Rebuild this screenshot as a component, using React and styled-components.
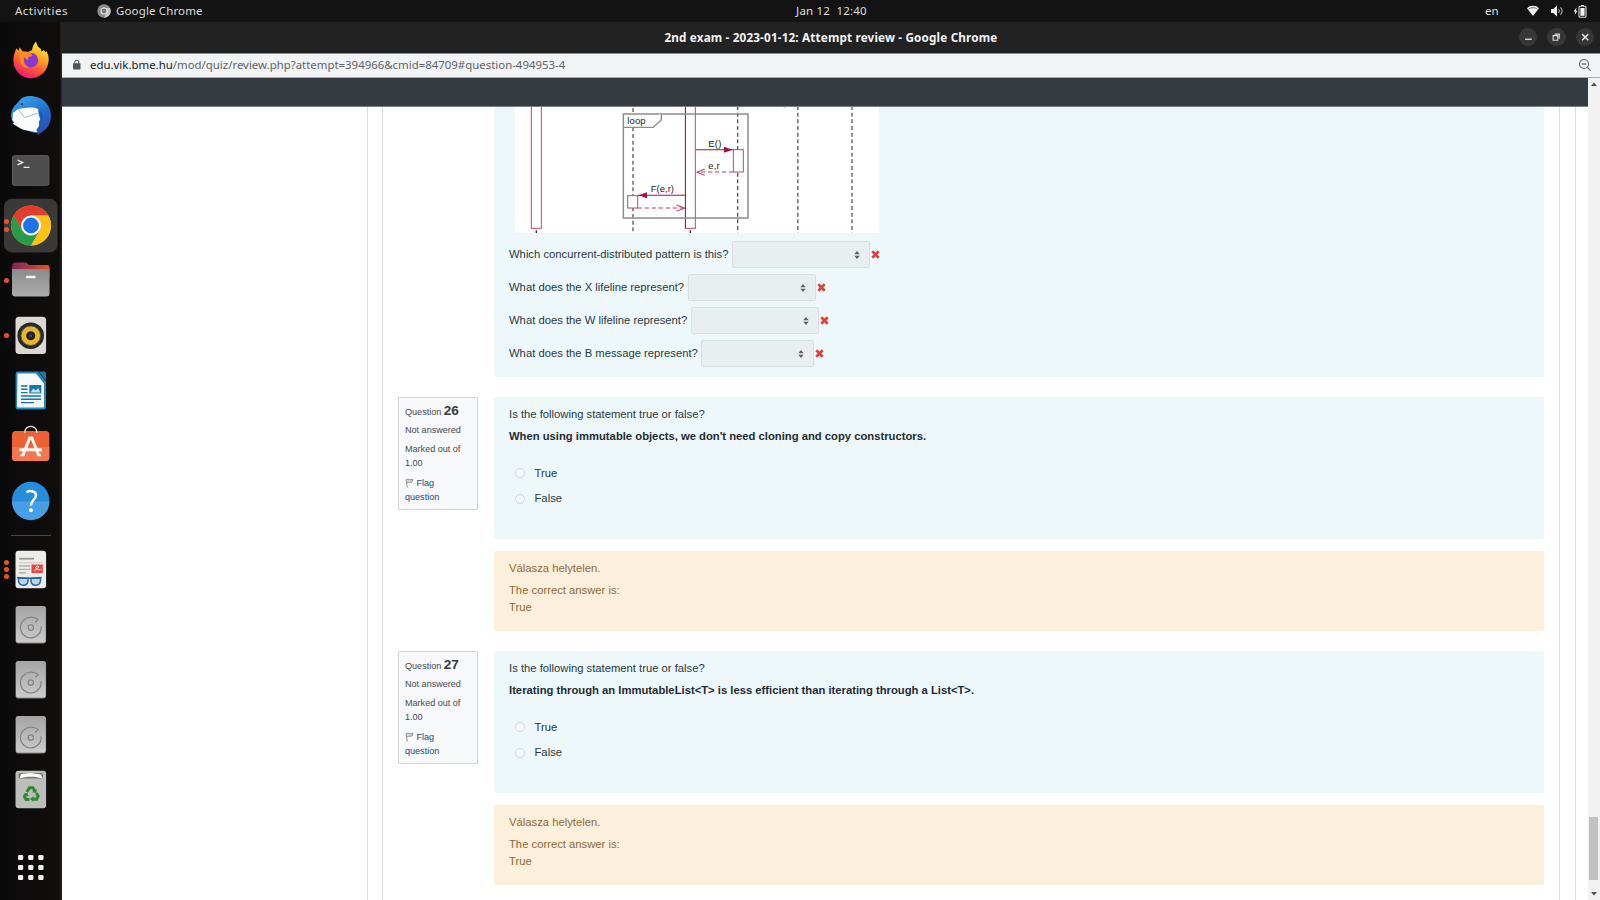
import React from "react";
import styled, { createGlobalStyle, css } from "styled-components";

const GlobalStyle = createGlobalStyle`
  * { box-sizing: border-box; }
  html, body { margin: 0; padding: 0; overflow: hidden; }
  body { background: #fff; font-family: "Liberation Sans", Arial, sans-serif; }
  p { margin: 0; }
`;

const uiFont = css`font-family: "Noto Sans", "Open Sans", sans-serif;`;

const Desktop = styled.div`
  width: 1600px;
  height: 900px;
  display: flex;
  flex-direction: column;
  overflow: hidden;
`;

const TopBar = styled.header`
  ${uiFont}
  flex: 0 0 22px;
  display: grid;
  grid-template-columns: 1fr auto 1fr;
  align-items: center;
  background: #131313;
  color: #dedede;
  font-size: 11.5px;
  line-height: 22px;
  white-space: pre;
`;
const TopLeft = styled.div`
  display: flex;
  align-items: center;
  padding-left: 15px;
`;
const Activities = styled.span`
  width: 82px;
  letter-spacing: 0.5px;
`;
const AppName = styled.span`
  margin-left: 5px;
  letter-spacing: 0.14px;
`;
const Clock = styled.span`
  margin-left: 63px;
  letter-spacing: 0.2px;
`;
const TopRight = styled.div`
  display: flex;
  justify-content: flex-end;
  align-items: center;
  padding-right: 13.5px;
`;
const Lang = styled.span`margin-right: 27px;`;
const StatusIcon = styled.svg`
  width: 14px;
  height: 14px;
  margin-left: ${(p) => p.$gap || 0}px;
`;

const Main = styled.div`
  flex: 1;
  display: flex;
  min-height: 0;
`;

const Dock = styled.nav`
  flex: 0 0 62px;
  display: flex;
  flex-direction: column;
  padding-top: 11px;
  background: linear-gradient(90deg, #0b0a0a 0, #100e0d 60px, #262626 61px);
`;
const DockItem = styled.div`
  flex: 0 0 55px;
  position: relative;
  svg { display: block; width: 62px; height: 55px; }
`;
const Dots = styled.div`
  position: absolute;
  left: 4px;
  top: 0;
  height: 55px;
  display: flex;
  flex-direction: column;
  justify-content: center;
  gap: 2.4px;
`;
const Dot = styled.i`
  width: 5px;
  height: 5px;
  border-radius: 50%;
  background: #e95420;
`;
const DockLine = styled.div`
  flex: 0 0 1px;
  margin: 6.5px 11px;
  background: #4a4846;
`;
const AppsItem = styled(DockItem)`margin-top: 22.5px;`;

const Window = styled.div`
  flex: 1;
  display: flex;
  flex-direction: column;
  min-width: 0;
`;
const TitleBar = styled.div`
  ${uiFont}
  flex: 0 0 31px;
  display: flex;
  align-items: center;
  justify-content: flex-end;
  background: #222;
  color: #f4f4f4;
  padding-right: 6px;
`;
const Title = styled.div`
  flex: 1;
  text-align: center;
  font-size: 11.7px;
  font-weight: 700;
  padding: 0 0 2px 81px;
  letter-spacing: 0.17px;
`;
const WinButtons = styled.div`
  display: flex;
  gap: 10px;
  padding-bottom: 1px;
`;
const WinButton = styled.div`
  width: 18.4px;
  height: 18.4px;
  border-radius: 50%;
  background: #373737;
  svg { display: block; width: 18.4px; height: 18.4px; }
`;
const UrlBar = styled.div`
  ${uiFont}
  flex: 0 0 25px;
  display: flex;
  align-items: center;
  border-top: 1px solid #8b8b8b;
  border-bottom: 1px solid #a9acae;
  background: #f1f3f4;
  padding: 0 8px 1px 9.5px;
  font-size: 11.4px;
  color: #5f6368;
`;
const LockIcon = styled.svg`
  width: 10px;
  height: 12px;
  margin-bottom: 1px;
`;
const Url = styled.div`
  flex: 1;
  margin-left: 8.5px;
  padding-bottom: 2px;
  letter-spacing: 0.01px;
`;
const Host = styled.span`color: #202124;`;
const ZoomIcon = styled.svg`width: 14px; height: 14px;`;

const Viewport = styled.div`
  flex: 1;
  display: flex;
  min-height: 0;
`;
const Page = styled.div`
  width: 1526px;
  display: flex;
  flex-direction: column;
`;
const NavBar = styled.div`
  flex: 0 0 29px;
  background: #363a41;
  border-bottom: 1px solid #7b7f84;
`;
const PageBody = styled.div`
  flex: 1;
  min-height: 0;
  padding: 0 12px 0 305px;
  display: flex;
  background: #fff;
`;
const OuterFrame = styled.div`
  flex: 1;
  border: solid #dcdee0;
  border-width: 0 1px;
  padding: 0 15px 0 14px;
  display: flex;
`;
const InnerFrame = styled.div`
  flex: 1;
  border: solid #dcdee0;
  border-width: 0 1px;
  padding: 0 15px 0 15px;
`;

const Scrollbar = styled.div`
  flex: 1;
  display: flex;
  flex-direction: column;
  align-items: center;
  background: #f1f1f1;
  svg { display: block; width: 12px; height: 13px; }
`;
const Track = styled.div`
  flex: 1;
  display: flex;
  flex-direction: column;
  justify-content: flex-end;
  padding-bottom: 7px;
`;
const Thumb = styled.div`
  width: 9px;
  height: 63px;
  margin-right: 1px;
  background: #c1c1c1;
`;

const Question = styled.section`
  display: flex;
  align-items: flex-start;
  margin-bottom: 20px;
`;
const Info = styled.aside`
  width: 80px;
  height: 113px;
  padding: 4px 6px;
  border: 1px solid #cfd4d8;
  border-radius: 1px;
  background: #f8f9fa;
  color: #454b51;
  font-size: 9.1px;
  line-height: 14px;
  letter-spacing: -0.02px;
`;
const QNumber = styled.h3`
  margin: 0;
  height: 21px;
  font-size: 9.1px;
  font-weight: 400;
  line-height: 17px;
  b { font-size: 13.6px; color: #343a40; }
`;
const State = styled.div`margin-bottom: 5.3px;`;
const Flag = styled.a`
  display: block;
  color: #274584;
  svg { width: 9px; height: 10px; vertical-align: -2px; margin-right: 2.5px; }
`;
const Content = styled.div`
  flex: 1;
  margin-left: 16px;
  &:only-child { margin-left: 96px; }
`;
const Formulation = styled.div`
  height: ${(p) => p.$h}px;
  padding: ${(p) => p.$pt}px 15px 0 15px;
  background: #eef7fa;
  border-radius: 2px;
  color: #2b393f;
  font-size: 11.26px;
  line-height: 17px;
`;
const Feedback = styled.div`
  height: 80px;
  margin-top: 12px;
  padding: 9px 15px 0 15px;
  background: #fcefdc;
  border-radius: 2px;
  color: #8f6b35;
  font-size: 11.26px;
  line-height: 17px;
`;
const Para = styled.p`margin-bottom: 5px;`;
const Statement = styled.p`
  font-weight: 700;
  color: #1f2c32;
  margin-bottom: 16px;
`;
const Option = styled.label`
  display: flex;
  align-items: center;
  height: 25.5px;
  padding-left: 6px;
`;
const Radio = styled.span`
  width: 10px;
  height: 10px;
  border: 1px solid #d2d6d8;
  border-radius: 50%;
  background: #f5f9fa;
  margin-right: 9.5px;
`;
const Diagram = styled.svg`
  display: block;
  width: 364px;
  height: 126px;
  margin: 0 0 5px 6px;
  background: #fff;
`;
const SelectRow = styled.div`
  display: flex;
  align-items: center;
  height: 33px;
`;
const Prompt = styled.span`
  width: ${(p) => p.$w}px;
  padding-bottom: 1px;
  white-space: nowrap;
`;
const Select = styled.div`
  width: ${(p) => p.$w}px;
  height: 27.5px;
  display: flex;
  align-items: center;
  justify-content: flex-end;
  padding-right: 9px;
  border: 1px solid #d9dfe3;
  border-radius: 2px;
  background: #e9eef1;
  svg { width: 6px; height: 8px; }
`;
const Cross = styled.svg`width: 9px; height: 9px; margin-left: 1px;`;

const disk = (
  <svg viewBox="0 0 62 55">
    <rect x="15.5" y="9" width="30.6" height="37.5" rx="3" fill="#8a8a8a" />
    <rect x="16" y="9" width="29.6" height="36.4" rx="2.6" fill="url(#diskFill)" />
    <circle cx="30.8" cy="30.6" r="2.7" fill="none" stroke="#858585" strokeWidth="1.3" />
    <path d="M35.300 25.200l2.700-2.600C34 19.200 27.500 19.300 23.500 23.300a10.300 10.300 0 1 0 17.500 6" fill="none" stroke="#858585" strokeWidth="1.3" />
  </svg>
);

const dockTop = [
  { id: "firefox", icon: (
    <svg viewBox="0 0 62 55">
      <defs>
        <linearGradient id="fox" x1="0.8" y1="0" x2="0.3" y2="1">
          <stop offset="0" stopColor="#fff04a" /><stop offset=".4" stopColor="#ffa320" />
          <stop offset=".7" stopColor="#ff4f38" /><stop offset="1" stopColor="#f0157c" />
        </linearGradient>
        <linearGradient id="diskFill" x1="0" y1="0" x2="0" y2="1">
          <stop offset="0" stopColor="#a4a4a4" /><stop offset="1" stopColor="#cbcbcb" />
        </linearGradient>
      </defs>
      <path d="M15.2 18.5l1.2-3.3 2.2 2.6 1-3.6 3 4.4 5.5.3 3.7-1.7 1.5-5 2.6-3.7 2 5 3 2.6.6 2.4 2.4-1.6 1.3 2.2 1.2-.9c1.2 2 2.5 5.3 2.3 9.1-.5 9.700-8.200 18-17.600 18-10 0-17.700-8-17.700-18 0-3 .5-5.900 1.800-8.800z" fill="url(#fox)" />
      <circle cx="31" cy="27.200" r="7.200" fill="#8a37d2" />
      <path d="M24 23.500c-1.500 4 .5 9.500 5.500 11-6 1-10-3-9.500-9l-2-5c3-2.500 8-2.500 12-1l2.500 3.500-4 1-1 3c-1.500-1-2.500-2-3.500-3.500z" fill="#ff8a22" />
    </svg>) },
  { id: "thunderbird", icon: (
    <svg viewBox="0 0 62 55">
      <defs><linearGradient id="bird" x1=".2" y1="0" x2=".8" y2="1">
        <stop offset="0" stopColor="#3aa6e8" /><stop offset=".5" stopColor="#2371cf" /><stop offset="1" stopColor="#2a4cb4" />
      </linearGradient></defs>
      <path d="M20 12c3-4 10-4.500 14-3.500C44 9.500 51 18 51 28c0 9-5.500 16-15 19l3-3-5 1-12-4C14 38 11 33 11 27c0-4 2-8 5-10.500z" fill="url(#bird)" />
      <path d="M13 25l5-4 7-1c5-.4 9-1 13 1l.8 6 1.500 4-1.500 3 .6 4-1.500 2-.5 4.500-15-3-10-6 2-.8-2-2.800z" fill="#fbfcfd" />
      <path d="M18 21l6.500 8.500 14-4.500" fill="none" stroke="#a9b2b9" strokeWidth=".9" />
      <circle cx="22" cy="16" r="1.100" fill="#173865" />
      <path d="M40 23c3 7 2 14-3 20" fill="none" stroke="#1d59b0" strokeWidth="2" />
    </svg>) },
  { id: "terminal", icon: (
    <svg viewBox="0 0 62 55">
      <rect x="12" y="12.300" width="37.300" height="30.500" rx="3" fill="#6b6b6b" />
      <rect x="12.700" y="13" width="36" height="29" rx="2.500" fill="#4d4d4d" />
      <path d="M17.500 17l5.200 2.400-5.200 2.500M23.500 24.300h6" fill="none" stroke="#eee" strokeWidth="1.300" />
    </svg>) },
  { id: "chrome", dots: 2, icon: (
    <svg viewBox="0 0 62 55">
      <rect x="4" y=".8" width="53.600" height="53.600" rx="8" fill="#3a3938" />
      <circle cx="31" cy="27.500" r="20" fill="#fbc116" />
      <path d="M13.680 17.500A20 20 0 0 1 48.320 17.500H31L22.340 32.500z" fill="#e33b2e" />
      <path d="M13.680 17.500A20 20 0 0 0 31 47.500L39.660 32.500 22.340 32.500z" fill="#2b9b4b" />
      <path d="M48.320 17.500A20 20 0 0 1 31 47.500L39.660 32.500 31 17.500z" fill="#fbc116" />
      <circle cx="31" cy="27.500" r="10" fill="#fff" />
      <circle cx="31" cy="27.500" r="7.900" fill="#1b74e8" />
    </svg>) },
  { id: "files", dots: 1, icon: (
    <svg viewBox="0 0 62 55">
      <defs><linearGradient id="folder"><stop offset="0" stopColor="#7c2658" /><stop offset="1" stopColor="#e84f26" /></linearGradient>
        <linearGradient id="gray" x1="0" y1="0" x2="0" y2="1"><stop offset="0" stopColor="#8b8b8b" /><stop offset="1" stopColor="#acacac" /></linearGradient></defs>
      <path d="M12 14c0-3 1-4.500 3-4.500h11l3 2.500h18c1.800 0 2.500 1 2.500 3v10H12z" fill="url(#folder)" />
      <path d="M12 16h37.500v24.500c0 2-1 3-3 3H15c-2 0-3-1-3-3z" fill="url(#gray)" />
      <rect x="26" y="22.700" width="9.500" height="2.600" rx=".5" fill="#f3f3f3" />
    </svg>) },
  { id: "rhythmbox", dots: 1, icon: (
    <svg viewBox="0 0 62 55">
      <rect x="15.500" y="8.700" width="30.600" height="37.300" rx="3.500" fill="#dcd7d2" />
      <circle cx="30.700" cy="27.700" r="13.300" fill="#26282a" />
      <circle cx="30.700" cy="27.700" r="9.800" fill="#e5b733" stroke="#5e5634" strokeWidth="1" />
      <circle cx="30.700" cy="27.700" r="4.500" fill="#24221f" />
      <circle cx="30.700" cy="27.700" r="1.500" fill="#4b4d50" />
    </svg>) },
  { id: "writer", icon: (
    <svg viewBox="0 0 62 55">
      <path d="M18 8.500h20l8 10V44c0 1.600-.8 2.400-2.400 2.400H18c-1.600 0-2.400-.8-2.400-2.400V11c0-1.700.8-2.500 2.400-2.500z" fill="#2587ba" />
      <path d="M38.500 8.500H44c1.500 0 2 .8 2 2v7z" fill="#1c78a8" />
      <path d="M17.500 10.500H36l8 10V43c0 1-.5 1.500-1.500 1.500h-24c-1 0-1.500-.5-1.500-1.500z" fill="#f5f9fb" />
      <path d="M21 23h6.500M21 26.300h6.500M21 29.600h6.500M21 33h20M21 36.300h20M21 39.600h13" stroke="#1c72a5" strokeWidth="1.400" />
      <rect x="29.300" y="22" width="12" height="8.500" fill="#1877ad" />
      <path d="M30.300 29.500l3-4 2.500 2 2.500-2.500 2 4.500z" fill="#bde1f4" />
    </svg>) },
  { id: "software", icon: (
    <svg viewBox="0 0 62 55">
      <rect x="12" y="13" width="37.300" height="30" rx="3.500" fill="#ed6234" />
      <path d="M12 29h37.300v10.500c0 2.300-1.200 3.500-3.500 3.500H15.500c-2.300 0-3.500-1.200-3.500-3.500z" fill="#f2794f" />
      <path d="M24.800 15v-.7a6 6 0 0 1 12 0v.7" fill="none" stroke="#eedccd" strokeWidth="1.300" />
      <path d="M23 37l6.700-17h2.200l6.700 17M19.500 31.800h22.500" fill="none" stroke="#fff7f2" strokeWidth="3" />
      <path d="M24.500 37.300h-4M37 37.300h4" stroke="#fff7f2" strokeWidth="2" />
    </svg>) },
  { id: "help", icon: (
    <svg viewBox="0 0 62 55">
      <circle cx="30.700" cy="27.500" r="18.700" fill="#268ddd" />
      <path d="M12 28.500h37.400a18.700 18.700 0 0 1-37.400 0z" fill="#45a0e5" />
      <path d="M26.500 19.200c2.500-1.800 9.500-1.900 9.500 2.900 0 4.900-5 4.900-5 10.300" fill="none" stroke="#fff" strokeWidth="2.500" />
      <circle cx="31" cy="37.200" r="2" fill="#fff" />
    </svg>) },
];

const dockBottom = [
  { id: "evince", dots: 3, icon: (
    <svg viewBox="0 0 62 55">
      <rect x="15.500" y="8.800" width="30.600" height="37.400" rx="3" fill="#ececeb" />
      <path d="M19 16.700h15" stroke="#9b998d" strokeWidth="1.800" />
      <path d="M19 20.700h23" stroke="#d0cec7" strokeWidth="1.200" />
      <path d="M19 24h11.500M19 27.400h11.500M19 30.700h7" stroke="#b4b1a4" strokeWidth="1.400" />
      <rect x="31.500" y="22.500" width="11.300" height="8.500" fill="#ec4440" />
      <path d="M34 29c1.500-1 5-3.500 4.500-4.500s-4 0-2.500 2 4 1 5.500.8" fill="none" stroke="#fff" strokeWidth="1" />
      <path d="M18.500 36.300h9.500c.5 3.500-.5 7-4.500 7s-5.500-3-5-7zM31 36.300h9.500c.5 4-1 7-5 7s-5-3.500-4.500-7z" fill="#bcd4e6" stroke="#2963ad" strokeWidth="1.500" />
      <path d="M17 35.600l11.500.7h2.500l10.500-.7" fill="none" stroke="#2963ad" strokeWidth="1.500" />
    </svg>) },
  { id: "disk-a", icon: disk },
  { id: "disk-b", icon: disk },
  { id: "disk-c", icon: disk },
  { id: "trash", icon: (
    <svg viewBox="0 0 62 55">
      <rect x="15.500" y="8.800" width="30.600" height="37.400" rx="3" fill="#bdbdbc" />
      <path d="M18.500 16.500v-3c0-1.800 1-2.500 2.500-2.500h19.500c1.500 0 2.500.8 2.500 2.500v3z" fill="#747474" />
      <path d="M19.500 16.500l1.500-4.500 9.500-1 10.500 1.500 1.500 4c-7-2-15-2.500-23 0z" fill="#fafafa" />
      <g fill="none" stroke="#2b8a2f" strokeWidth="3">
        <path d="M26.800 30l2.600-4.300h3.500l1.800 3.200" />
        <path d="M36.500 31.100l1.600 3-1.500 3.100h-3.300" />
        <path d="M29.500 37.500h-3.500l-1.500-3 1.300-2.300" />
      </g>
      <path d="M36.600 27v4l-4.500-.8zM33.500 34v6l-3.500-3zM23 32l4.500-1.300 1 4z" fill="#2b8a2f" />
    </svg>) },
];

function DockEntry({ icon, dots = 0 }) {
  return (
    <DockItem>
      {icon}
      {dots > 0 && <Dots>{Array.from({ length: dots }, (_, i) => <Dot key={i} />)}</Dots>}
    </DockItem>
  );
}

function SequenceDiagram() {
  return (
    <Diagram viewBox="75 51 1092 378">
      <g stroke="#5a5a5a" strokeWidth="4" strokeDasharray="12 8">
        <path d="M429 54V66M429 112V429M743 48V429M923.500 48V429M1086 48V429" />
      </g>
      <path d="M139 421v8M601 421v8M881 50h5" stroke="#333" strokeWidth="4" />
      <g fill="#fff" stroke="#c0476d" strokeWidth="3">
        <rect x="124" y="30" width="30" height="385" />
        <rect x="586" y="30" width="30" height="385" />
        <rect x="730" y="179" width="30" height="67" />
        <rect x="413" y="317" width="30" height="37" />
      </g>
      <path d="M586.500 48V415" stroke="#8b2552" strokeWidth="3" />
      <rect x="400" y="72" width="374" height="312" fill="none" stroke="#8c8c8c" strokeWidth="4.500" />
      <path d="M400 112H490L514 90V72" fill="#fff" stroke="#8c8c8c" strokeWidth="4" />
      <g stroke="#a51545" strokeWidth="3.200" fill="none">
        <path d="M618 179H730M586 316H443" />
        <path d="M730 246H622M443 354H580" strokeDasharray="13 8" stroke="#bd4068" />
        <path d="M644 237L621 246.500 644 256M560 345L584 354.500 560 363" stroke="#bd4068" />
      </g>
      <path d="M728 179l-26-9v18zM446 316l25-9v18z" fill="#a51040" />
      <g fontFamily="Liberation Sans" fontSize="28.500" fill="#222">
        <text x="412" y="101" textLength="55">loop</text>
        <text x="655" y="171" textLength="39">E()</text>
        <text x="655" y="238" textLength="34">e,r</text>
        <text x="482" y="305" textLength="70">F(e,r)</text>
      </g>
    </Diagram>
  );
}

const prompts = [
  ["Which concurrent-distributed pattern is this?", 223, 138],
  ["What does the X lifeline represent?", 178.500, 128],
  ["What does the W lifeline represent?", 182, 128],
  ["What does the B message represent?", 192, 113],
];

const questions = [
  [26, "When using immutable objects, we don't need cloning and copy constructors."],
  [27, "Iterating through an ImmutableList<T> is less efficient than iterating through a List<T>."],
];

function TrueFalse({ number, statement }) {
  return (
    <Question>
      <Info>
        <QNumber>Question <b>{number}</b></QNumber>
        <State>Not answered</State>
        <State>Marked out of<br />1.00</State>
        <Flag>
          <svg viewBox="0 0 9 10"><path d="M1 1.500l1.300 8M1 1.700c2.500-1.400 4 .8 7-.4L7 4C5 4.500 3.700 3.800 1.700 5" fill="#d4d7d9" stroke="#92979b" strokeWidth="1" /></svg>
          Flag<br />question
        </Flag>
      </Info>
      <Content>
        <Formulation $h={142} $pt={8.5}>
          <Para>Is the following statement true or false?</Para>
          <Statement>{statement}</Statement>
          <Option><Radio />True</Option>
          <Option><Radio />False</Option>
        </Formulation>
        <Feedback>
          <Para>Válasza helytelen.</Para>
          <p>The correct answer is:</p>
          <p>True</p>
        </Feedback>
      </Content>
    </Question>
  );
}

export default function App() {
  return (
    <Desktop>
      <GlobalStyle />
      <TopBar>
        <TopLeft>
          <Activities>Activities</Activities>
          <svg width="14" height="14" viewBox="0 0 14 14">
            <circle cx="7" cy="7" r="6.700" fill="#8d8d8d" />
            <path d="M7 4h6a6.700 6.700 0 0 1-6 9.700L9.700 8.500z" fill="#c6c6c6" />
            <circle cx="7" cy="7" r="3.500" fill="#e2e2e2" /><circle cx="7" cy="7" r="2.400" fill="#777" />
          </svg>
          <AppName>Google Chrome</AppName>
        </TopLeft>
        <Clock>{"Jan 12  12:40"}</Clock>
        <TopRight>
          <Lang>en</Lang>
          <StatusIcon viewBox="0 0 14 14"><path d="M1 4.300C4 1 10 1 13 4.300L7 12z" fill="#f2f2f2" /><path d="M2.500 5.200c2.500-2 6.500-2 9 0" fill="none" stroke="#555" strokeWidth=".9" /></StatusIcon>
          <StatusIcon $gap={10} viewBox="0 0 14 14"><path d="M1 5h2.300L7 1.500v11L3.300 9H1z" fill="#f2f2f2" /><path d="M8.500 5c1 1.200 1 2.800 0 4M10.500 3.300c2 2.300 2 5.200 0 7.500" fill="none" stroke="#aaa" strokeWidth="1.100" /></StatusIcon>
          <StatusIcon $gap={9} viewBox="0 0 14 14"><path d="M3.500 3.500L.5 7.500h1.800L1.700 11 4.500 6.700H3z" fill="#eee" /><rect x="6" y="2.200" width="7" height="11" rx="1" fill="none" stroke="#ddd" strokeWidth="1.100" /><path d="M8 1h3v1H8z" fill="#ddd" /><rect x="7.400" y="4" width="4.200" height="7.800" fill="#f5f5f5" /></StatusIcon>
        </TopRight>
      </TopBar>
      <Main>
        <Dock>
          {dockTop.map((d) => <DockEntry key={d.id} {...d} />)}
          <DockLine />
          {dockBottom.map((d) => <DockEntry key={d.id} {...d} />)}
          <AppsItem>
            <svg viewBox="0 0 62 55">
              {[17.500, 27.500, 37.500].map((y) => [18, 28.200, 38.300].map((x) => (
                <rect key={`${x}-${y}`} x={x} y={y - 2.500} width="5.200" height="5" rx="1.200" fill="#f4f4f4" />
              )))}
            </svg>
          </AppsItem>
        </Dock>
        <Window>
          <TitleBar>
            <Title>2nd exam - 2023-01-12: Attempt review - Google Chrome</Title>
            <WinButtons>
              <WinButton><svg viewBox="0 0 18 18"><path d="M6 11h6.500" stroke="#eee" strokeWidth="1.200" /></svg></WinButton>
              <WinButton><svg viewBox="0 0 18 18"><path d="M6 7.500h4.500V12H6zM7.500 6H12v4.500" fill="none" stroke="#ddd" strokeWidth="1.100" /></svg></WinButton>
              <WinButton><svg viewBox="0 0 18 18"><path d="M6 6l6 6M12 6l-6 6" stroke="#e8e8e8" strokeWidth="1.400" /></svg></WinButton>
            </WinButtons>
          </TitleBar>
          <UrlBar>
            <LockIcon viewBox="0 0 10 12"><rect x="1" y="4.300" width="7.500" height="6.200" rx=".8" fill="#505458" /><path d="M2.800 5V3.200a2 2 0 0 1 4 0V5" fill="none" stroke="#505458" strokeWidth="1.100" /></LockIcon>
            <Url><Host>edu.vik.bme.hu</Host>/mod/quiz/review.php?attempt=394966&amp;cmid=84709#question-494953-4</Url>
            <ZoomIcon viewBox="0 0 14 14"><circle cx="6" cy="6" r="4.500" fill="none" stroke="#6b6f73" strokeWidth="1.200" /><path d="M4 6h4M9.300 9.300l3.300 3.300" stroke="#6b6f73" strokeWidth="1.300" /></ZoomIcon>
          </UrlBar>
          <Viewport>
            <Page>
              <NavBar />
              <PageBody>
                <OuterFrame>
                  <InnerFrame>
                    <Question>
                      <Content>
                        <Formulation $h={270} $pt={0}>
                          <SequenceDiagram />
                          {prompts.map(([text, tw, sw]) => (
                            <SelectRow key={text}>
                              <Prompt $w={tw}>{text}</Prompt>
                              <Select $w={sw}>
                                <svg viewBox="0 0 6 8"><path d="M3 0l2.700 3.200H.3zM3 8l2.700-3.200H.3z" fill="#5c6165" /></svg>
                              </Select>
                              <Cross viewBox="0 0 9 9"><path d="M1.300 1.300l6.400 6.400M7.700 1.300L1.300 7.700" stroke="#d8433d" strokeWidth="2.700" /></Cross>
                            </SelectRow>
                          ))}
                        </Formulation>
                      </Content>
                    </Question>
                    {questions.map(([n, s]) => <TrueFalse key={n} number={n} statement={s} />)}
                  </InnerFrame>
                </OuterFrame>
              </PageBody>
            </Page>
            <Scrollbar>
              <svg viewBox="0 0 12 13"><path d="M3 8l3-3.500L9 8z" fill="#505050" /></svg>
              <Track><Thumb /></Track>
              <svg viewBox="0 0 12 13"><path d="M3 5l3 3.500L9 5z" fill="#505050" /></svg>
            </Scrollbar>
          </Viewport>
        </Window>
      </Main>
    </Desktop>
  );
}
